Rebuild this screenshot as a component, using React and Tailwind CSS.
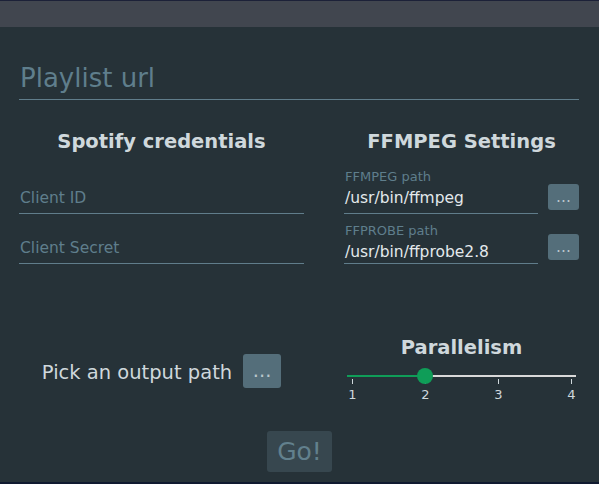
import { useState } from 'react';

function Field({ label, value, placeholder, className = '', valueClass = 'pb-[5px]' }) {
  return (
    <div className={`border-b border-[#607d8b] ${valueClass} ${className}`}>
      {label && (
        <div className="text-[13px] leading-[16px] text-[#5f7e8c] pl-px">{label}</div>
      )}
      <div
        className={`text-[15.5px] leading-[20px] pl-px ${
          value ? 'text-[#e3e9ec] mt-[3px]' : 'text-[#5f7e8c]'
        }`}
      >
        {value || placeholder}
      </div>
    </div>
  );
}

function DotsButton({ className = '' }) {
  return (
    <button
      type="button"
      className={`bg-[#546e7a] rounded-[3px] text-[#b9c6cc] flex items-center justify-center ${className}`}
    >
      ...
    </button>
  );
}

function Slider({ value, setValue }) {
  const ticks = [1, 2, 3, 4];
  const pos = 5 + (value - 1) * 73;
  return (
    <div className="ml-[3px] w-[229px]">
      <div className="relative h-[16px] mt-[8px]">
        <div className="absolute top-[7px] left-0 right-0 h-[2px] bg-[#d9d9d9]" />
        <div className="absolute top-[7px] left-0 h-[2px] bg-[#0f9d58]" style={{ width: pos }} />
        <div
          className="absolute top-0 w-4 h-4 rounded-full bg-[#0f9d58] z-10"
          style={{ left: pos - 8 }}
        />
      </div>
      <div className="flex justify-between ml-[5px] w-[220px] -mt-[5px]">
        {ticks.map((t) => (
          <button
            key={t}
            type="button"
            onClick={() => setValue(t)}
            className="w-px flex flex-col items-center"
          >
            <span className="block w-px h-[5px] bg-[#cfd8dc]" />
            <span className="block mt-[3px] text-[13px] leading-[16px] text-[#cfd8dc] whitespace-nowrap">
              {t}
            </span>
          </button>
        ))}
      </div>
    </div>
  );
}

export default function App() {
  const [parallel, setParallel] = useState(2);

  return (
    <div className="w-[599px] h-[484px] flex flex-col overflow-hidden font-['DejaVu_Sans',sans-serif] bg-[#1b2036]">
      <div className="h-px bg-[#1c2138]" />
      <div className="h-[26px] bg-[#41464f]" />

      <div className="h-[455px] bg-[#263238] flex flex-col">
        <div className="ml-[19px] mt-[35px] w-[560px] border-b border-[#607d8b] pb-[5px] text-[26px] leading-[32px] text-[#5f7e8c] pl-px">
          Playlist url
        </div>

        <div className="flex mt-[28px]">
          <div className="ml-[19px] w-[285px]">
            <h2 className="pt-[2px] text-center font-bold text-[19.5px] leading-[24px] text-[#cfd8dc]">
              Spotify credentials
            </h2>
            <Field placeholder="Client ID" className="mt-[34px]" />
            <Field placeholder="Client Secret" className="mt-[24px]" />
          </div>

          <div className="ml-[40px] w-[235px]">
            <h2 className="pt-[2px] text-center font-bold text-[19.5px] leading-[24px] text-[#cfd8dc]">
              FFMPEG Settings
            </h2>
            <div className="flex items-start mt-[15px]">
              <Field label="FFMPEG path" value="/usr/bin/ffmpeg" className="w-[194px]" />
              <DotsButton className="ml-[10px] mt-[15px] w-[31px] h-[26px] text-[15.5px] leading-[20px]" />
            </div>
            <div className="flex items-start mt-[9px]">
              <Field
                label="FFPROBE path"
                value="/usr/bin/ffprobe2.8"
                className="w-[194px]"
                valueClass="pb-px"
              />
              <DotsButton className="ml-[10px] mt-[11px] w-[31px] h-[26px] text-[15.5px] leading-[20px]" />
            </div>
          </div>
        </div>

        <div className="flex h-[167px]">
          <div className="ml-[19px] w-[285px]">
            <div className="mt-[90px] flex items-center justify-center gap-[11px]">
              <span className="mt-[3px] text-[19.5px] leading-[24px] text-[#cfd8dc]">Pick an output path</span>
              <DotsButton className="w-[38px] h-[34px] text-[19.5px] leading-[24px]" />
            </div>
          </div>
          <div className="ml-[40px] w-[235px]">
            <h2 className="mt-[72px] text-center font-bold text-[19.5px] leading-[24px] text-[#cfd8dc]">
              Parallelism
            </h2>
            <Slider value={parallel} setValue={setParallel} />
          </div>
        </div>

        <button
          type="button"
          className="mx-auto w-[65px] h-[41px] rounded-[3px] bg-[#37474f] text-[#62808d] text-[25px] leading-[32px] flex items-center justify-center"
        >
          Go!
        </button>
      </div>

      <div className="h-[2px] bg-[#101a30]" />
    </div>
  );
}
